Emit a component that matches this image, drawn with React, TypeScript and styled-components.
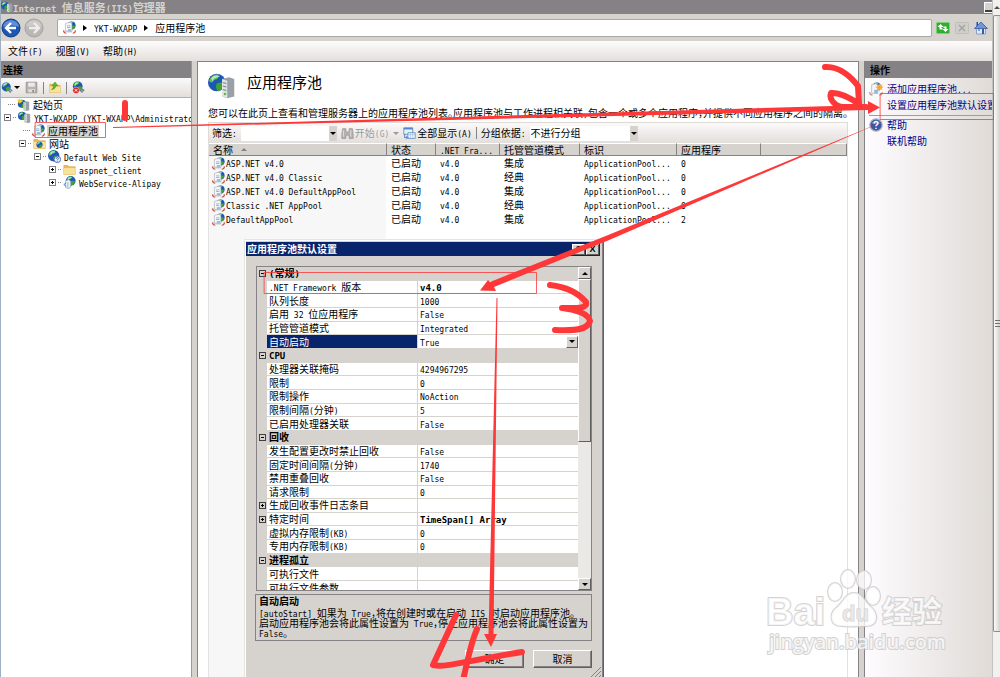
import React from "react";
import styled, { createGlobalStyle, css } from "styled-components";

const GlobalStyle = createGlobalStyle`
  * { box-sizing: border-box; }
  body {
    margin: 0;
    background: #d6d3ce;
    color: #000;
    font-family: "Noto Sans CJK SC", sans-serif;
    font-size: 10px;
    line-height: 12px;
    overflow: hidden;
  }
  button, input, select { font: inherit; color: inherit; border-radius: 0; }
`;

/* ---------- mixed script text ---------- */

const Latin = styled.span`
  font-family: "DejaVu Sans Mono", monospace;
  font-size: 8px;
  line-height: 1px;
  white-space: pre;
`;

const T = ({ children }: { children: string }) => (
  <>
    {children
      .split(/([\x20-\x7e]+)/)
      .filter(Boolean)
      .map((part, i) => (/^[\x20-\x7e]/.test(part) ? <Latin key={i}>{part}</Latin> : <React.Fragment key={i}>{part}</React.Fragment>))}
  </>
);

/* ---------- icons ---------- */

const IconSvg = styled.svg`
  display: block;
  flex: none;
`;

type IconProps = { size?: number };

const Globe = ({ cx = 8, cy = 8, r = 7 }: { cx?: number; cy?: number; r?: number }) => (
  <g transform={`translate(${cx - r} ${cy - r}) scale(${r / 8})`}>
    <circle cx="8" cy="8" r="8" fill="#1c56b8" />
    <path d="M1 7C2 2 7 0 10 1c-1 2 0 3-2 4-3 0-3 3-5 3z" fill="#5fc43c" />
    <path d="M8 9c3-2 7-1 7 1-1 3-4 6-6 6-2-2-2-5-1-7z" fill="#3fa52c" />
    <path d="M3 4C5 1 9 1 11 3 8 3 5 4 4 7z" fill="#d6f0ff" opacity=".75" />
  </g>
);

const Server = ({ x = 8, y = 4, s = 1 }: { x?: number; y?: number; s?: number }) => (
  <g transform={`translate(${x} ${y}) scale(${s})`}>
    <path d="M0 1l4-1 3 1v10l-4 1-3-1z" fill="#9aa0a6" />
    <path d="M0 1l3 1v10l-3-1z" fill="#dfe3e6" />
    <path d="M.5 3l2 .6M.5 5l2 .6M.5 7l2 .6" stroke="#7d858c" strokeWidth=".6" />
    <circle cx="1.7" cy="9.6" r=".7" fill="#49c630" />
  </g>
);

const SiteIcon = ({ size = 14 }: IconProps) => (
  <IconSvg width={size} height={size} viewBox="0 0 16 16">
    <Globe cx={5} cy={6} r={5} />
    <Server x={8} y={3} />
  </IconSvg>
);

const PoolIcon = ({ size = 14 }: IconProps) => (
  <IconSvg width={size} height={size} viewBox="0 0 16 16">
    <Globe cx={10.5} cy={5.5} r={5} />
    <path d="M3 3l5-1.5 3 1.5v10H3z" fill="#f4f6f8" stroke="#9aa6b2" strokeWidth=".7" />
    <path d="M5 6h4M5 8h4" stroke="#7fa9d6" />
    <path d="M6 10h4v3H6z" fill="#8fb6dd" />
    <path d="M1 11.500c-.5 2 1 3.500 3 3.500M15 11.500c.5 2-1 3.500-3 3.500" stroke="#d0483f" strokeWidth="1.600" fill="none" />
    <path d="M4 13h7" stroke="#bcc4ca" strokeWidth="2" />
  </IconSvg>
);

const AddPoolIcon = ({ size = 14 }: IconProps) => (
  <IconSvg width={size} height={size} viewBox="0 0 16 16">
    <Globe cx={9} cy={5} r={4.5} />
    <path d="M3 3l4-1 3 1v10H3z" fill="#f4f6f8" stroke="#9aa6b2" strokeWidth=".7" />
    <path d="M6 9h4v4H6z" fill="#8fb6dd" />
    <path d="M1 11.500c-.5 2 1 3.500 3 3.500M15 11.500c.5 2-1 3.500-3 3.500" stroke="#b98f8a" strokeWidth="1.400" fill="none" />
    <circle cx="12" cy="6" r="3.2" fill="#ffc13a" />
    <path d="M12 1.5v9M7.6 6h9M9 3l6 6M15 3L9 9" stroke="#ff9b21" strokeWidth=".9" />
  </IconSvg>
);

const StartIcon = ({ size = 14 }: IconProps) => (
  <IconSvg width={size} height={size} viewBox="0 0 16 16">
    <Globe cx={6} cy={7} r={5} />
    <Server x={8} y={4} />
    <path d="M3 0l1 2 2 0-1.500 1.700.7 2.300-2.200-1.200L1 6l.6-2.300L0 2l2 0z" fill="#ffc527" />
  </IconSvg>
);

const FolderIcon = ({ size = 14, globe = false, up = false }: IconProps & { globe?: boolean; up?: boolean }) => (
  <IconSvg width={size} height={size} viewBox="0 0 16 16">
    <path d="M1 3h5l1 1.500h8V14H1z" fill="#e8b84a" stroke="#c79a3c" strokeWidth=".6" />
    <path d="M1 6h14v8H1z" fill="#fbe29a" />
    {globe && <Globe cx={8} cy={9.5} r={3.8} />}
    {up && <path d="M3 10c5 0 6-3 6-5h3L8 0 4 5h2c0 2-1 4-3 5z" fill="#58b92c" stroke="#2f8414" strokeWidth=".5" />}
  </IconSvg>
);

const WebIcon = ({ size = 14 }: IconProps) => (
  <IconSvg width={size} height={size} viewBox="0 0 16 16">
    <Globe cx={7} cy={7} r={7} />
    <circle cx="11.500" cy="11.500" r="4" fill="#eef3fa" stroke="#2c5aa8" />
    <path d="M10.200 10.600c0-2 2.800-1.800 2.600 0-.1 1-1.300.9-1.300 2M11.500 13.400v.9" stroke="#1c3f8c" fill="none" />
  </IconSvg>
);

const AppIcon = ({ size = 14 }: IconProps) => (
  <IconSvg width={size} height={size} viewBox="0 0 16 16">
    <Globe cx={9.5} cy={6} r={6} />
    <path d="M3 6l4-1.500L9.500 6v8L6 15.500 3 14z" fill="#eef3f7" stroke="#7f95ab" strokeWidth=".7" />
    <path d="M6 7.500v7" stroke="#8aa9c8" />
    <path d="M4 8.500L1 10.500l3 2" stroke="#3277c8" fill="none" />
  </IconSvg>
);

const ConnectIcon = ({ size = 14, stop = false }: IconProps & { stop?: boolean }) => (
  <IconSvg width={size} height={size} viewBox="0 0 16 16">
    <Globe cx={7} cy={6.5} r={6} />
    <path d="M9 10l4 4M11 9l4 3" stroke="#6c7f94" strokeWidth="2" />
    {stop && (
      <>
        <circle cx="5" cy="11.500" r="4" fill="#d3262b" stroke="#fff" strokeWidth=".5" />
        <path d="M3.400 9.900l3.200 3.200M6.600 9.900l-3.200 3.200" stroke="#fff" strokeWidth="1.200" />
      </>
    )}
  </IconSvg>
);

const SaveIcon = ({ size = 14 }: IconProps) => (
  <IconSvg width={size} height={size} viewBox="0 0 16 16">
    <path d="M1.500 1.500h13v13h-13z" fill="#b7b5b2" stroke="#8d8b89" />
    <path d="M4 2h8v5H4z" fill="#eceae8" />
    <path d="M4 10h8v4H4z" fill="#dedcda" />
    <path d="M9 11h2v3H9z" fill="#8d8b89" />
  </IconSvg>
);

const BinocularsIcon = ({ size = 14 }: IconProps) => (
  <IconSvg width={size} height={size} viewBox="0 0 16 16">
    <path d="M2 2h4v3l1 1h2l1-1V2h4l1 7v5h-5v-4H6v4H1V9z" fill="#b4b2b0" stroke="#8f8d8b" strokeWidth=".8" />
    <path d="M3 4v8M12 4v8" stroke="#e8e6e4" />
  </IconSvg>
);

const ShowAllIcon = ({ size = 14 }: IconProps) => (
  <IconSvg width={size} height={size} viewBox="0 0 16 16">
    <path d="M1 1h11v8H1z" fill="#e9f2fb" stroke="#5c86b8" />
    <path d="M1 1h11v2H1z" fill="#4f87c9" />
    <path d="M6 7h9v7H6z" fill="#fff" stroke="#5c86b8" />
    <path d="M6 9.500h9M9 7v7M12 7v7" stroke="#8fb1d8" strokeWidth=".8" />
    <path d="M2 9v4h3M4 11l2 2-2 2" stroke="#2e70c0" fill="none" />
  </IconSvg>
);

const HelpIcon = ({ size = 14 }: IconProps) => (
  <IconSvg width={size} height={size} viewBox="0 0 16 16">
    <circle cx="8" cy="8" r="7" fill="#3a55a8" stroke="#a7adbd" strokeWidth="1.500" />
    <path d="M3 6c2-4 8-4 10 0-3 1-7 1-10 0z" fill="#8fa3dc" opacity=".7" />
    <path d="M5.800 6.300c0-3.200 4.600-2.800 4.400-.2-.1 1.600-2.200 1.500-2.200 3.400M8 11v1.700" stroke="#fff" strokeWidth="1.700" fill="none" />
  </IconSvg>
);

const NavIcon = ({ forward = false }: { forward?: boolean }) => (
  <IconSvg width="20" height="20" viewBox="0 0 20 20">
    <circle cx="10" cy="10" r="9" fill={forward ? "#b9b8b6" : "#1d57b4"} stroke={forward ? "#a3a2a0" : "#153d80"} />
    <path d="M2 9C3 0 17 0 18 9c-5-2-11-2-16 0z" fill={forward ? "#d2d1cf" : "#6f9ce0"} opacity=".8" />
    <path
      d={forward ? "M10 5l5 5-5 5M15 10H5" : "M10 5l-5 5 5 5M5 10h10"}
      stroke={forward ? "#eeedec" : "#fff"}
      strokeWidth="2.400"
      fill="none"
    />
  </IconSvg>
);

const RefreshIcon = () => (
  <IconSvg width="14" height="14" viewBox="0 0 14 14">
    <rect x=".5" y="1.500" width="13" height="11" rx="1" fill="#2fae2f" stroke="#7fce76" />
    <path d="M4.500 3L1.500 6h2v2.500h3V7H5.500V6h2zM9.500 11l3-3h-2V5.500h-3V7h1v1h-2z" fill="#fff" />
  </IconSvg>
);

const StopIcon = () => (
  <IconSvg width="14" height="14" viewBox="0 0 14 14">
    <rect x=".5" y="1.500" width="13" height="11" rx="1" fill="#d0cecb" stroke="#c0bebb" />
    <path d="M4 4l6 6M10 4l-6 6" stroke="#a5a3a1" strokeWidth="1.500" />
  </IconSvg>
);

const HomeIcon = () => (
  <IconSvg width="14" height="14" viewBox="0 0 14 14">
    <path d="M2.500 6.500h9V13h-9z" fill="#dfe8f6" stroke="#8aa2cc" />
    <path d="M7 1L.5 7.500h13z" fill="#6f96d6" stroke="#4a6bb0" />
    <path d="M2.500 1h1.500v4H2.500z" fill="#2c4f96" />
    <path d="M8 8h2v5H8z" fill="#3b5c9c" />
    <path d="M4 8h2v2H4z" fill="#6da4e8" />
  </IconSvg>
);

const Triangle = styled.span<{ $dir: "up" | "down" | "right"; $color?: string }>`
  flex: none;
  width: 0;
  height: 0;
  border: 3px solid transparent;
  ${({ $dir, $color = "#000" }) =>
    $dir === "up"
      ? css`border-top-width: 0; border-bottom-color: ${$color};`
      : $dir === "down"
      ? css`border-bottom-width: 0; border-top-color: ${$color};`
      : css`border-right-width: 0; border-left: 4px solid ${$color};`}
`;

/* ---------- window frame ---------- */

const Screen = styled.div`
  position: relative;
  display: flex;
  height: 100vh;
  overflow: hidden;
`;

const Window = styled.div`
  flex: 1;
  min-width: 0;
  display: flex;
  flex-direction: column;
  border-left: 1px solid #9fb0c0;
`;

const TitleBar = styled.header`
  display: flex;
  align-items: center;
  height: 14px;
  flex: none;
  background: #848284;
  color: #d6d3ce;
  font-weight: 700;
`;

const TitleText = styled.h1`
  flex: 1;
  margin: 0;
  font-size: 11px;
  line-height: 14px;
  ${Latin} { font-size: 9px; }
`;

const MinimizeButton = styled.button`
  width: 8px;
  height: 11px;
  padding: 0;
  border: 1px solid #fff;
  border-right: 0;
  background: #d6d3ce;
  box-shadow: inset 0 -2px 0 #404040;
`;

const NavBar = styled.nav`
  display: flex;
  align-items: center;
  height: 27px;
  flex: none;
  gap: 3px;
  padding-right: 4px;
`;

const PlainButton = styled.button`
  display: flex;
  align-items: center;
  gap: 2px;
  padding: 0;
  border: 0;
  background: none;
  white-space: nowrap;
`;

const AddressBar = styled.div`
  flex: 1;
  display: flex;
  align-items: center;
  height: 18px;
  margin: 0 1px 0 10px;
  padding-left: 5px;
  background: #fff;
  border: 1px solid #aaa8a4;
  border-radius: 2px;

  ${Triangle} { margin: 0 7px; }
`;

const NavTools = styled.div`
  display: flex;
  gap: 5px;
`;

const MenuBar = styled.div`
  display: flex;
  align-items: center;
  gap: 13px;
  height: 20px;
  flex: none;
  padding-left: 7px;
  background: linear-gradient(#fdfcfc, #e4dfdc);
`;

const Body = styled.div`
  flex: 1;
  min-height: 0;
  display: grid;
  grid-template-columns: 191px minmax(0, 1fr) 128px;
  gap: 5px;
`;

const Panel = styled.section`
  min-width: 0;
  display: flex;
  flex-direction: column;
  overflow: hidden;
  background: #fff;
  border-right: 1px solid #9c9a98;
`;

const PanelTitle = styled.h2`
  flex: none;
  margin: 0;
  padding-left: 2px;
  height: 17px;
  font-size: 10px;
  line-height: 17px;
  background: #848284;
`;

/* ---------- connections tree ---------- */

const TreeToolbar = styled.div`
  display: flex;
  align-items: center;
  gap: 5px;
  height: 20px;
  flex: none;
  border-bottom: 1px solid #b5b2ae;
  background: linear-gradient(#fbfafa, #e2dedb);

  ${PlainButton} { gap: 1px; }
`;

const Separator = styled.span`
  width: 1px;
  height: 12px;
  background: #848284;
`;

const Tree = styled.ul`
  list-style: none;
  margin: 0;
  padding: 0;
`;

const TreeRow = styled.li<{ $level: number }>`
  display: flex;
  align-items: center;
  gap: 2px;
  height: 13px;
  padding-left: ${({ $level }) => $level * 15}px;
  white-space: nowrap;
`;

const Expander = styled.button`
  display: flex;
  align-items: center;
  justify-content: center;
  flex: none;
  width: 7px;
  height: 7px;
  margin-left: 3px;
  padding: 0;
  border: 1px solid #848284;
  background: #fff;
`;

const Sign = ({ open }: { open: boolean }) => (
  <IconSvg width="5" height="5" viewBox="0 0 5 5">
    <path d={open ? "M1 2.500h3" : "M1 2.500h3M2.500 1v3"} stroke="#000" />
  </IconSvg>
);

const Branch = styled.span<{ $wide?: boolean }>`
  flex: none;
  width: ${({ $wide }) => ($wide ? 7 : 3)}px;
  margin-left: ${({ $wide }) => ($wide ? 7 : 0)}px;
  border-top: 1px dotted #848284;
`;

const TreeLabel = styled.span<{ $selected?: boolean }>`
  padding: 0 1px;
  background: ${({ $selected }) => ($selected ? "#d6d3ce" : "transparent")};
`;

type Node = { level: number; icon: React.ReactNode; label: string; state?: "open" | "closed"; selected?: boolean };

const nodes: Node[] = [
  { level: 0, icon: <StartIcon size={13} />, label: "起始页" },
  { level: 0, icon: <SiteIcon size={13} />, label: "YKT-WXAPP (YKT-WXAPP\\Administrator)", state: "open" },
  { level: 1, icon: <PoolIcon size={13} />, label: "应用程序池", selected: true },
  { level: 1, icon: <FolderIcon size={13} globe />, label: "网站", state: "open" },
  { level: 2, icon: <WebIcon size={13} />, label: "Default Web Site", state: "open" },
  { level: 3, icon: <FolderIcon size={13} />, label: "aspnet_client", state: "closed" },
  { level: 3, icon: <AppIcon size={13} />, label: "WebService-Alipay", state: "closed" },
];

/* ---------- main content ---------- */

const Main = styled(Panel).attrs({ as: "main" })`
  border: 1px solid #848284;
  border-bottom: 0;
  padding: 0 10px;
`;

const Heading = styled.div`
  display: flex;
  align-items: center;
  gap: 11px;
  padding-top: 5px;
  height: 43px;
  flex: none;

  h2 {
    margin: 0;
    padding-bottom: 8px;
    font-size: 15px;
    line-height: 20px;
    font-weight: 400;
  }
`;

const Intro = styled.p`
  margin: 0 -8px 0 0;
  height: 17px;
  line-height: 15px;
  flex: none;
  white-space: nowrap;
  font-feature-settings: "halt";
`;

const FilterBar = styled.div`
  display: flex;
  align-items: center;
  gap: 4px;
  height: 21px;
  flex: none;
  padding-left: 3px;
  border: 1px solid #dedad6;
  border-bottom: 0;
  background: linear-gradient(#fbfafa, #e2dedb);
  white-space: nowrap;

  ${PlainButton} { gap: 1px; }
`;

const Combo = styled.div<{ $width: number }>`
  display: flex;
  width: ${({ $width }) => $width}px;
  height: 15px;
  background: #fff;

  input, select {
    flex: 1;
    min-width: 0;
    padding: 0 1px;
    border: 0;
    outline: 0;
    appearance: none;
    background: none;
    line-height: 14px;
  }
`;

const ComboArrow = styled.span`
  display: flex;
  align-items: center;
  justify-content: center;
  width: 8px;
  background: #d6d3ce;
`;

const Muted = styled.span`
  color: #9c9a98;
`;

const ListArea = styled.div`
  flex: 1;
  border: 1px solid #e4e1de;
  border-width: 0 1px;
  background: linear-gradient(90deg, #f7f7f7 177px, #fff 177px);
`;

const PoolTable = styled.table`
  width: 100%;
  border-collapse: separate;
  border-spacing: 0;
  table-layout: fixed;

  th, td {
    padding: 0 0 0 4px;
    text-align: left;
    font-weight: 400;
    line-height: 12px;
    white-space: nowrap;
    overflow: hidden;
  }
  td { height: 14px; }
  td:first-child { padding-left: 3px; }
  th {
    height: 13px;
    background: #d6d3ce;
    border-top: 1px solid #fff;
    border-right: 1px solid #848284;
    border-bottom: 1px solid #848284;
    line-height: 11px;
  }
  th ${Triangle} { display: inline-block; margin: 0 0 3px 8px; }
`;

const NameCell = styled.div`
  display: flex;
  align-items: center;
  gap: 1px;
`;

const pools: [string, string, string][] = [
  ["ASP.NET v4.0", "集成", "0"],
  ["ASP.NET v4.0 Classic", "经典", "0"],
  ["ASP.NET v4.0 DefaultAppPool", "集成", "0"],
  ["Classic .NET AppPool", "经典", "0"],
  ["DefaultAppPool", "集成", "2"],
];

/* ---------- actions ---------- */

const Actions = styled.aside`
  min-width: 0;
  overflow: hidden;
  border-left: 1px solid #848284;
  background: linear-gradient(90deg, #fefcff, #e0dbd7);

  ${PanelTitle} { padding-left: 5px; }
`;

const ActionList = styled.div`
  padding: 3px 0 0 4px;
`;

const ActionLink = styled.a`
  display: flex;
  align-items: center;
  gap: 4px;
  height: 16px;
  color: #00008b;
  text-decoration: none;
  white-space: nowrap;
`;

const IconSlot = styled.span`
  flex: none;
  width: 14px;
`;

const ActionRule = styled.hr`
  margin: 2px 0 1px;
  border: 0;
  border-top: 1px solid #a09d9a;
`;

/* ---------- outer scroll bar ---------- */

const PageScroll = styled.div`
  flex: none;
  width: 8px;
  display: flex;
  flex-direction: column;
  align-items: center;
  background: #f1f1f1;
  border-left: 1px solid #c4c2c0;
`;

const PageScrollTop = styled.div`
  display: flex;
  align-items: center;
  height: 15px;
`;

const PageThumb = styled.div`
  flex: 1;
  width: 100%;
  display: flex;
  align-items: center;
  justify-content: flex-end;
  margin-bottom: 45px;
  border: 1px solid #8e8e8e;
  border-right: 0;
  border-radius: 2px 0 0 2px;
  background: linear-gradient(90deg, #fafafa, #d2d2d4);
`;

const Grip = styled.span`
  width: 5px;
  height: 7px;
  background: repeating-linear-gradient(#707070 0 1px, transparent 1px 3px);
`;

/* ---------- dialog ---------- */

const Dialog = styled.div`
  position: absolute;
  left: 244px;
  top: 239px;
  width: 360px;
  display: flex;
  flex-direction: column;
  padding: 2px 3px 0 1px;
  background: #d6d3ce;
  border: 1px solid #e6e4e0;
  border-right-color: #606060;
  box-shadow: inset -1px 0 #848284, inset 1px 1px #fff;
`;

const DialogTitle = styled.div`
  display: flex;
  align-items: center;
  height: 14px;
  padding: 0 1px;
  background: #08246b;
  color: #fff;

  h2 {
    flex: 1;
    margin: 0;
    font-size: 10px;
    line-height: 14px;
  }
`;

const raised = css`
  background: #d6d3ce;
  border: 1px solid;
  border-color: #fff #606060 #606060 #fff;
`;

const CaptionButton = styled.button`
  ${raised}
  width: 13px;
  height: 11px;
  padding: 0;
  margin-left: 1px;
  color: #000;
  font: 700 9px/9px "Liberation Sans", sans-serif;
`;

const DialogBody = styled.div`
  display: flex;
  flex-direction: column;
  padding: 10px 8px 0 9px;
`;

const GridBox = styled.div`
  display: flex;
  height: 325px;
  margin-left: 1px;
  border: 1px solid #848284;
  overflow: hidden;
`;

const GridView = styled.div`
  flex: 1;
  overflow: hidden;
`;

const PropTable = styled.table`
  width: 100%;
  height: 328px;
  border-collapse: separate;
  border-spacing: 0;
  table-layout: fixed;

  td, th {
    padding: 0 0 0 2px;
    text-align: left;
    font-weight: 400;
    line-height: 12px;
    white-space: nowrap;
    border-bottom: 1px solid #d6d3ce;
  }
  th { border-right: 1px solid #d6d3ce; }
  td:first-child { background: #d6d3ce; }
  ${Expander} { margin-left: 0; border-color: #404040; background: transparent; }
`;

const PropRow = styled.tr<{ $group?: boolean; $selected?: boolean; $bold?: boolean }>`
  background: ${({ $group }) => ($group ? "#d6d3ce" : "#fff")};
  th {
    ${({ $group }) => $group && "font-weight: 700;"}
    ${({ $selected }) => $selected && "background: #08246b; color: #fff;"}
  }
  td:last-child { ${({ $bold }) => $bold && "font-weight: 700;"} }
  ${({ $group }) => $group && css`th ${Latin} { font-size: 9px; }`}
  ${({ $bold }) => $bold && css`td ${Latin} { font-size: 9px; }`}
`;

const ValueCell = styled.div`
  display: flex;
  justify-content: space-between;
  height: 12px;
`;

const DropButton = styled.button`
  ${raised}
  display: flex;
  align-items: center;
  justify-content: center;
  width: 12px;
  height: 12px;
  padding: 0;
`;

const GridScroll = styled.div`
  flex: none;
  width: 13px;
  display: flex;
  flex-direction: column;
  background: #ebe9e6;

  ${DropButton} { width: 13px; }
`;

const GridThumb = styled.div`
  ${raised}
  height: 163px;
  margin-bottom: auto;
`;

const HelpBox = styled.div`
  height: 47px;
  margin-top: 3px;
  padding: 0 3px;
  border: 1px solid #848284;

  h3 { margin: 0 0 1px; font-size: 10px; line-height: 12px; }
  p { margin: 0; line-height: 10px; white-space: nowrap; font-feature-settings: "halt"; }
`;

const DialogButtons = styled.div`
  display: flex;
  justify-content: flex-end;
  gap: 9px;
  padding: 9px 0 9px;
`;

const PushButton = styled.button`
  ${raised}
  width: 59px;
  height: 18px;
  padding: 0;
  line-height: 14px;
  box-shadow: inset -1px -1px #848284;
`;

const ResizeGrip = styled.svg`
  position: absolute;
  right: 2px;
  bottom: 0;
`;

type Prop = { name: string; value?: string; group?: boolean; selected?: boolean; bold?: boolean; open?: boolean };

const props: Prop[] = [
  { name: "(常规)", group: true, open: true },
  { name: ".NET Framework 版本", value: "v4.0", bold: true },
  { name: "队列长度", value: "1000" },
  { name: "启用 32 位应用程序", value: "False" },
  { name: "托管管道模式", value: "Integrated" },
  { name: "自动启动", value: "True", selected: true },
  { name: "CPU", group: true, open: true },
  { name: "处理器关联掩码", value: "4294967295" },
  { name: "限制", value: "0" },
  { name: "限制操作", value: "NoAction" },
  { name: "限制间隔(分钟)", value: "5" },
  { name: "已启用处理器关联", value: "False" },
  { name: "回收", group: true, open: true },
  { name: "发生配置更改时禁止回收", value: "False" },
  { name: "固定时间间隔(分钟)", value: "1740" },
  { name: "禁用重叠回收", value: "False" },
  { name: "请求限制", value: "0" },
  { name: "生成回收事件日志条目", open: false },
  { name: "特定时间", value: "TimeSpan[] Array", bold: true, open: false },
  { name: "虚拟内存限制(KB)", value: "0" },
  { name: "专用内存限制(KB)", value: "0" },
  { name: "进程孤立", group: true, open: true },
  { name: "可执行文件" },
  { name: "可执行文件参数" },
];

/* ---------- hand-drawn notes and watermark ---------- */

const Overlay = styled.svg`
  position: absolute;
  left: 0;
  top: 0;
  pointer-events: none;
`;

const Watermark = () => (
  <g fill="#fff" fillOpacity=".75" stroke="#c9c7c7" strokeWidth="2" strokeOpacity=".8" paintOrder="stroke">
    <text x="766" y="625" fontFamily="Liberation Sans, sans-serif" fontWeight="700" fontSize="38">Bai</text>
    <ellipse cx="835" cy="592" rx="7" ry="9" />
    <ellipse cx="848" cy="579" rx="7" ry="9" />
    <ellipse cx="864" cy="580" rx="7" ry="9" />
    <ellipse cx="873" cy="596" rx="7" ry="9" />
    <path d="M854 593c8 0 10 8 17 14 8 7 7 19-4 19-8 0-18 1-26 0-11 0-12-12-5-18 8-6 9-15 18-15z" />
    <text x="842" y="621" fontFamily="Liberation Sans, sans-serif" fontWeight="700" fontSize="22" fill="#e6e4e4" strokeWidth="1">du</text>
    <text x="882" y="622" fontFamily="Noto Sans CJK SC, sans-serif" fontWeight="700" fontSize="30">经验</text>
    <text x="769" y="649" fontFamily="Open Sans, sans-serif" fontWeight="600" fontSize="20">jingyan.baidu.com</text>
  </g>
);

const Notes = () => (
  <g fill="none" stroke="#fe3838" strokeLinecap="round" strokeLinejoin="round">
    <g fill="#fe3838" stroke="none">
      <path d="M113 127L868 105V101L880 107.500L868 114V110L113 128z" />
      <path d="M887 120L607 235.500L490 282L488 280L480 290.500L496 291L494 287L608 240.500z" />
      <path d="M496.500 298L488.500 634H484L491 647L497 634H493.500L497.500 298z" />
    </g>
    <g strokeWidth="1" strokeOpacity=".8">
      <rect x="35.500" y="122.500" width="70" height="15" />
      <rect x="880.500" y="93.500" width="113" height="26" />
      <rect x="264.500" y="272.500" width="272" height="21" />
    </g>
    <g strokeWidth="6">
      <path d="M125 103L125 118" />
      <path d="M825 67C840 66 852 78 858 86L859 104C849 97 840 92 831 93C829 98 833 105 842 107H866" />
      <path d="M550 285C568 287 580 295 586 302C588 309 576 308 562 308C575 309 589 314 590 321C588 330 574 331 555 330" />
      <path d="M456 615L433 665C445 668 465 661 522 652M477 629C470 645 468 660 463 680" />
    </g>
  </g>
);

export default function App() {
  return (
    <Screen>
      <GlobalStyle />
      <Window>
        <TitleBar>
          <SiteIcon size={12} />
          <TitleText><T>Internet 信息服务(IIS)管理器</T></TitleText>
          <MinimizeButton aria-label="最小化" />
        </TitleBar>
        <NavBar>
          <PlainButton aria-label="后退"><NavIcon /></PlainButton>
          <PlainButton aria-label="前进"><NavIcon forward /></PlainButton>
          <AddressBar>
            <PoolIcon size={13} />
            <Triangle $dir="right" />
            <span><T>YKT-WXAPP</T></span>
            <Triangle $dir="right" />
            <span>应用程序池</span>
          </AddressBar>
          <NavTools>
            <PlainButton aria-label="刷新"><RefreshIcon /></PlainButton>
            <PlainButton aria-label="停止"><StopIcon /></PlainButton>
            <PlainButton aria-label="主页"><HomeIcon /></PlainButton>
          </NavTools>
        </NavBar>
        <MenuBar>
          {["文件(F)", "视图(V)", "帮助(H)"].map((m) => (
            <PlainButton key={m}><span><T>{m}</T></span></PlainButton>
          ))}
        </MenuBar>
        <Body>
          <Panel>
            <PanelTitle>连接</PanelTitle>
            <TreeToolbar>
              <PlainButton aria-label="连接"><ConnectIcon size={12} /><Triangle $dir="down" /></PlainButton>
              <PlainButton aria-label="保存"><SaveIcon size={13} /></PlainButton>
              <Separator />
              <PlainButton aria-label="向上"><FolderIcon size={12} up /></PlainButton>
              <Separator />
              <PlainButton aria-label="断开"><ConnectIcon size={13} stop /></PlainButton>
            </TreeToolbar>
            <Tree>
              {nodes.map((n) => (
                <TreeRow key={n.label} $level={n.level}>
                  {n.state && <Expander aria-label={n.label}><Sign open={n.state === "open"} /></Expander>}
                  <Branch $wide={!n.state} />
                  {n.icon}
                  <TreeLabel $selected={n.selected}><T>{n.label}</T></TreeLabel>
                </TreeRow>
              ))}
            </Tree>
          </Panel>
          <Main>
            <Heading>
              <SiteIcon size={28} />
              <h2>应用程序池</h2>
            </Heading>
            <Intro>
              您可以在此页上查看和管理服务器上的应用程序池列表。应用程序池与工作进程相关联，包含一个或多个应用程序，并提供不同应用程序之间的隔离。
            </Intro>
            <FilterBar>
              <label htmlFor="filter"><T>筛选:</T></label>
              <Combo $width={96}>
                <input id="filter" />
                <ComboArrow><Triangle $dir="down" /></ComboArrow>
              </Combo>
              <PlainButton>
                <BinocularsIcon size={13} />
                <Muted><T>开始(G)</T></Muted>
              </PlainButton>
              <Triangle $dir="down" $color="#9c9a98" />
              <PlainButton>
                <ShowAllIcon size={13} />
                <span><T>全部显示(A)</T></span>
              </PlainButton>
              <Separator />
              <label htmlFor="group"><T>分组依据:</T></label>
              <Combo $width={108}>
                <select id="group"><option>不进行分组</option></select>
                <ComboArrow><Triangle $dir="down" /></ComboArrow>
              </Combo>
            </FilterBar>
            <ListArea>
              <PoolTable>
                <colgroup>
                  <col width="178" /><col width="49" /><col width="64" /><col width="80" />
                  <col width="97" /><col width="84" /><col />
                </colgroup>
                <thead>
                  <tr>
                    <th>名称<Triangle $dir="up" $color="#848284" /></th>
                    <th>状态</th>
                    <th><T>.NET Fra...</T></th>
                    <th>托管管道模式</th>
                    <th>标识</th>
                    <th>应用程序</th>
                    <th />
                  </tr>
                </thead>
                <tbody>
                  {pools.map(([name, mode, apps]) => (
                    <tr key={name}>
                      <td><NameCell><PoolIcon size={13} /><span><T>{name}</T></span></NameCell></td>
                      <td>已启动</td>
                      <td><T>v4.0</T></td>
                      <td>{mode}</td>
                      <td><T>ApplicationPool...</T></td>
                      <td><T>{apps}</T></td>
                      <td />
                    </tr>
                  ))}
                </tbody>
              </PoolTable>
            </ListArea>
          </Main>
          <Actions>
            <PanelTitle>操作</PanelTitle>
            <ActionList>
              <ActionLink href="#add"><AddPoolIcon /><span><T>添加应用程序池...</T></span></ActionLink>
              <ActionLink href="#defaults"><IconSlot />设置应用程序池默认设置</ActionLink>
              <ActionRule />
              <ActionLink href="#help"><HelpIcon />帮助</ActionLink>
              <ActionLink href="#online"><IconSlot />联机帮助</ActionLink>
            </ActionList>
          </Actions>
        </Body>
      </Window>
      <PageScroll>
        <PageScrollTop><Triangle $dir="up" $color="#505050" /></PageScrollTop>
        <PageThumb><Grip /></PageThumb>
      </PageScroll>

      <Dialog role="dialog" aria-labelledby="dialog-title">
        <DialogTitle>
          <h2 id="dialog-title">应用程序池默认设置</h2>
          <CaptionButton>?</CaptionButton>
          <CaptionButton aria-label="关闭">X</CaptionButton>
        </DialogTitle>
        <DialogBody>
          <GridBox>
            <GridView>
              <PropTable>
                <colgroup><col width="10" /><col width="151" /><col /></colgroup>
                <tbody>
                  {props.map((p) => (
                    <PropRow key={p.name} $group={p.group} $selected={p.selected} $bold={p.bold}>
                      <td>{p.open !== undefined && <Expander aria-label={p.name}><Sign open={p.open} /></Expander>}</td>
                      <th scope="row"><T>{p.name}</T></th>
                      <td>
                        <ValueCell>
                          <span><T>{p.value ?? ""}</T></span>
                          {p.selected && <DropButton aria-label="选择"><Triangle $dir="down" /></DropButton>}
                        </ValueCell>
                      </td>
                    </PropRow>
                  ))}
                </tbody>
              </PropTable>
            </GridView>
            <GridScroll>
              <DropButton aria-label="向上滚动"><Triangle $dir="up" /></DropButton>
              <GridThumb />
              <DropButton aria-label="向下滚动"><Triangle $dir="down" /></DropButton>
            </GridScroll>
          </GridBox>
          <HelpBox>
            <h3>自动启动</h3>
            <p>
              <T>[autoStart] 如果为 True，将在创建时或在启动 IIS 时启动应用程序池。</T><br />
              <T>启动应用程序池会将此属性设置为 True，停止应用程序池会将此属性设置为</T><br />
              <T>False。</T>
            </p>
          </HelpBox>
          <DialogButtons>
            <PushButton>确定</PushButton>
            <PushButton>取消</PushButton>
          </DialogButtons>
        </DialogBody>
        <ResizeGrip width="11" height="11" viewBox="0 0 11 11">
          <path d="M1 11L11 1M5 11l6-6M9 11l2-2" stroke="#848284" />
        </ResizeGrip>
      </Dialog>

      <Overlay width="1000" height="677" viewBox="0 0 1000 677">
        <Watermark />
        <Notes />
      </Overlay>
    </Screen>
  );
}
